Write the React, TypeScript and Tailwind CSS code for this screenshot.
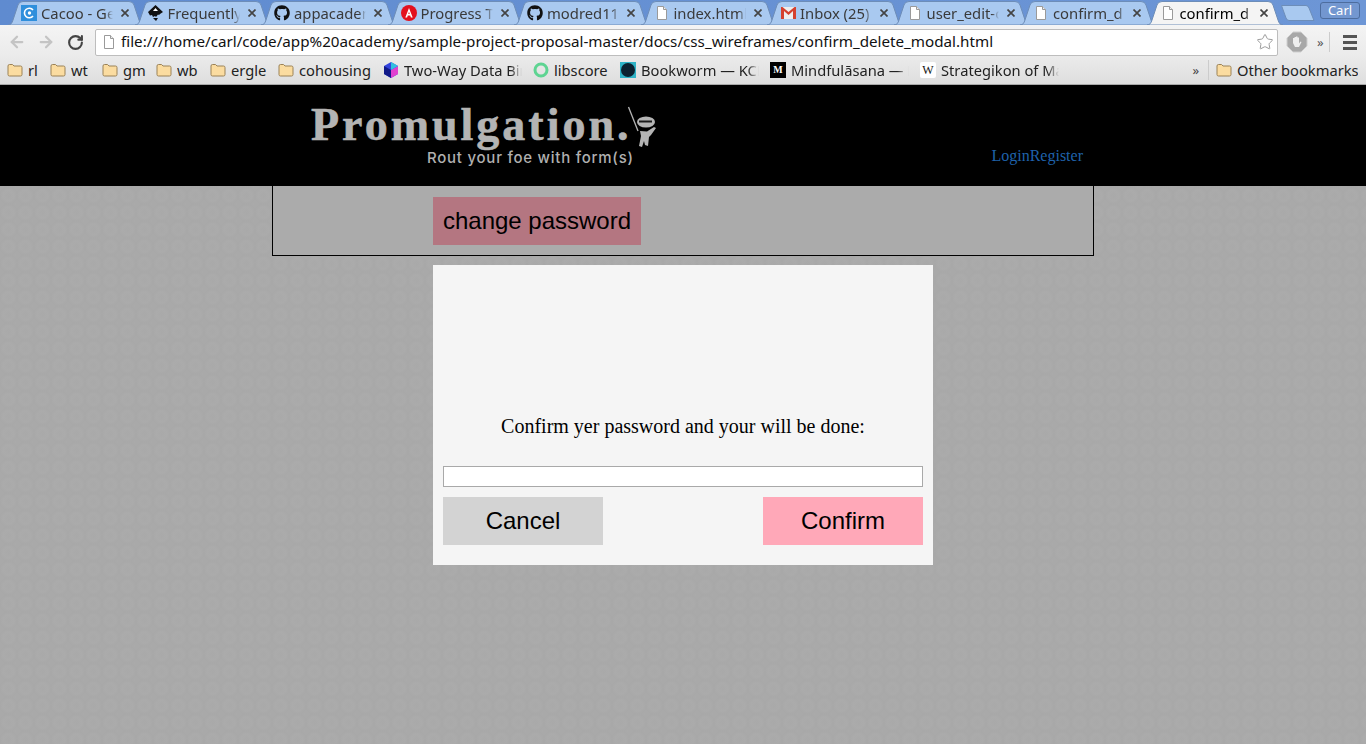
import { ArrowLeft, ArrowRight, RotateCw, Star } from "lucide-react";
import { FaGithub } from "react-icons/fa";

const sans = "font-['Liberation_Sans',Arial,sans-serif]";
const ui = "font-['Noto_Sans','Open_Sans',sans-serif]";

function PageIcon() {
  return (
    <svg width="12" height="14" viewBox="0 0 12 14" className="shrink-0">
      <path d="M1.500.5h6l3 3v10h-9z" fill="#fff" stroke="#9a9a9a" />
      <path d="M7.500.5v3h3" fill="#eee" stroke="#9a9a9a" />
    </svg>
  );
}

function FolderIcon() {
  return (
    <svg width="16" height="14" viewBox="0 0 16 14" className="shrink-0">
      <path d="M1 3q0-1.500 1.500-1.500h3L7 3h6.500Q15 3 15 4.500v7q0 1.500-1.500 1.500h-11Q1 13 1 11.500z" fill="#fbdca0" stroke="#9b8257" />
    </svg>
  );
}

function CacooIcon() {
  return (
    <svg width="16" height="16" viewBox="0 0 16 16" className="shrink-0">
      <rect width="16" height="16" fill="#2f8fdc" />
      <path d="M12 5A4.800 4.800 0 1 0 12 11" fill="none" stroke="#fff" strokeWidth="1.600" />
      <circle cx="8.500" cy="8" r="1.700" fill="#fff" />
    </svg>
  );
}

function InkscapeIcon() {
  return (
    <svg width="17" height="16" viewBox="0 0 17 16" className="shrink-0">
      <path d="M8.500 0L16 7l-3 2-1 1-1-.500L9 12l-1-1-2 1-1-2-2 .500L1 7z" fill="#111" />
      <path d="M8.500 3L11 6H6z" fill="#fff" />
      <path d="M6 13h5l-2 3z" fill="#111" />
    </svg>
  );
}

function AngularIcon() {
  return (
    <svg width="16" height="16" viewBox="0 0 16 16" className="shrink-0">
      <circle cx="8" cy="8" r="8" fill="#e3101e" />
      <path d="M8 3l3.700 9.500h-1.800l-.7-2H6.800l-.7 2H4.300zM7.300 9h1.400L8 6.800z" fill="#fff" />
    </svg>
  );
}

function GmailIcon() {
  return (
    <svg width="15" height="12" viewBox="0 0 15 12" className="shrink-0">
      <rect width="15" height="12" fill="#eee" />
      <path d="M0 0v12h3V4l4.500 4L12 4v8h3V0h-1.500L7.500 5 1.500 0z" fill="#d5412f" />
    </svg>
  );
}

type TabProps = { title: string; icon: React.ReactNode; active?: boolean };

function Tab({ title, icon, active }: TabProps) {
  return (
    <div className="relative flex h-[25px] w-[126.500px] shrink-0 items-center pl-[13px]">
      <svg width="136" height="24" viewBox="0 0 136 24" className="absolute left-0 top-[1px]">
        <path
          d="M0 24C3 24 4 22 5 19L10 4Q11 .5 15 .5H121Q125 .5 126 4L131 19C132 22 133 24 136 24Z"
          fill={active ? "#f4f4f4" : "#a9c9f0"}
          stroke="#6d8db8"
        />
      </svg>
      <div className="relative flex w-[16px] justify-center">{icon}</div>
      <div
        className={`relative ml-[4px] w-[72px] overflow-hidden whitespace-nowrap text-[14.800px] leading-[20px] [mask-image:linear-gradient(to_right,#000_90%,transparent)] ${active ? "text-black" : "text-[#3a3a3a]"} ${ui}`}
      >
        {title}
      </div>
      <div className="absolute left-[108px] top-[4px] flex h-[18px] w-[18px] items-center justify-center">
        <svg width="8" height="8" viewBox="0 0 8 8">
          <path d="M.5.5l7 7M7.500.5l-7 7" stroke="#444" strokeWidth="1.700" />
        </svg>
      </div>
    </div>
  );
}

type BookmarkProps = { label: string; icon: React.ReactNode; itemWidth: string; fade?: boolean };

function Bookmark({ label, icon, itemWidth, fade }: BookmarkProps) {
  return (
    <div className={`flex shrink-0 items-center gap-[5px] ${itemWidth}`}>
      {icon}
      <span
        className={`overflow-hidden whitespace-nowrap text-[14.700px] leading-[20px] text-[#222] ${ui} ${fade ? "w-[118px] [mask-image:linear-gradient(to_right,#000_90%,transparent)]" : ""}`}
      >
        {label}
      </span>
    </div>
  );
}

function BrowserChrome() {
  return (
    <div className="h-[85px] border-b border-[#a8a8a8]">
      <div className="relative flex h-[25px] bg-gradient-to-r from-[#5f8bd0] to-[#6d96d6] pl-[8px]">
        <Tab title="Cacoo - Get" icon={<CacooIcon />} />
        <Tab title="Frequently" icon={<InkscapeIcon />} />
        <Tab title="appacadem" icon={<FaGithub className="h-[16px] w-[16px] text-[#111]" />} />
        <Tab title="Progress T" icon={<AngularIcon />} />
        <Tab title="modred11," icon={<FaGithub className="h-[16px] w-[16px] text-[#111]" />} />
        <Tab title="index.html" icon={<PageIcon />} />
        <Tab title="Inbox (25)" icon={<GmailIcon />} />
        <Tab title="user_edit-c" icon={<PageIcon />} />
        <Tab title="confirm_d" icon={<PageIcon />} />
        <Tab title="confirm_d" icon={<PageIcon />} active />
        <svg width="34" height="16" viewBox="0 0 34 16" className="absolute left-[1281px] top-[5px]">
          <path d="M.5.5H25Q27 .5 28 3L33 15.500H8Q6 15.500 5 13z" fill="#a9c9f0" stroke="#6d8db8" />
        </svg>
        <div className={`absolute left-[1320px] top-[2px] flex h-[17px] w-[40px] items-center justify-center rounded-[3px] border border-[#4d6d9e] bg-[#7397d0] text-[13px] leading-none text-white ${ui}`}>
          Carl
        </div>
      </div>
      <div className="flex h-[31px] items-center bg-gradient-to-b from-[#f4f4f4] to-[#ebebeb] pl-[8px] pr-[5px] pt-[3px]">
        <ArrowLeft className="h-[18px] w-[18px] text-[#c4c4c4]" strokeWidth={3} />
        <ArrowRight className="ml-[11px] h-[18px] w-[18px] text-[#c4c4c4]" strokeWidth={3} />
        <RotateCw className="ml-[12px] h-[17px] w-[17px] text-[#444]" strokeWidth={3} />
        <div className="ml-[11px] flex h-[27px] w-[1183px] items-center rounded-[2px] border border-[#bdbdbd] bg-white pl-[7px] pr-[3px]">
          <PageIcon />
          <span className={`ml-[6px] whitespace-nowrap text-[15.200px] leading-none text-[#111] ${ui}`}>
            file:///home/carl/code/app%20academy/sample-project-proposal-master/docs/css_wireframes/confirm_delete_modal.html
          </span>
          <Star className="ml-auto h-[18px] w-[18px] text-[#999]" strokeWidth={1.300} />
        </div>
        <svg width="22" height="22" viewBox="0 0 22 22" className="ml-[8px]">
          <path d="M7 1h8l6 6v8l-6 6H7l-6-6V7z" fill="#a8a8a8" stroke="#cfcfcf" />
          <path d="M7 11V7h1.500v3V6h1.500v4V5.500h1.500V10V6.500H13v6l1.500-2 1 .5-2.500 5H9l-2-4z" fill="#eee" />
        </svg>
        <span className={`ml-[9px] text-[13px] leading-none text-[#555] ${ui}`}>»</span>
        <div className="ml-[5px] h-[20px] w-px bg-[#ccc]" />
        <div className="ml-[13px] flex w-[14px] flex-col gap-[3px]">
          <div className="h-[3px] bg-[#555]" />
          <div className="h-[3px] bg-[#555]" />
          <div className="h-[3px] bg-[#555]" />
        </div>
      </div>
      <div className="flex h-[28px] items-center bg-gradient-to-b from-[#ebebeb] to-[#dedede] pl-[7px] pr-[8px]">
        <Bookmark label="rl" itemWidth="w-[43px]" icon={<FolderIcon />} />
        <Bookmark label="wt" itemWidth="w-[52px]" icon={<FolderIcon />} />
        <Bookmark label="gm" itemWidth="w-[54px]" icon={<FolderIcon />} />
        <Bookmark label="wb" itemWidth="w-[54px]" icon={<FolderIcon />} />
        <Bookmark label="ergle" itemWidth="w-[68px]" icon={<FolderIcon />} />
        <Bookmark label="cohousing" itemWidth="w-[105px]" icon={<FolderIcon />} />
        <Bookmark
          label="Two-Way Data Binding"
          itemWidth="w-[150px]"
          fade
          icon={
            <svg width="16" height="16" viewBox="0 0 16 16" className="shrink-0">
              <path d="M8 0l7 4v8l-7 4-7-4V4z" fill="#3344dd" />
              <path d="M8 8l7-4v8l-7 4z" fill="#e040d0" />
              <path d="M8 0l7 4-7 4z" fill="#30c0e0" />
              <path d="M1 4l7 4v8l-7-4z" fill="#111a88" />
            </svg>
          }
        />
        <Bookmark
          label="libscore"
          itemWidth="w-[87px]"
          icon={
            <svg width="16" height="16" viewBox="0 0 16 16" className="shrink-0">
              <circle cx="8" cy="8" r="6" fill="none" stroke="#5ed492" strokeWidth="3" />
            </svg>
          }
        />
        <Bookmark
          label="Bookworm — KCRW"
          itemWidth="w-[150px]"
          fade
          icon={
            <svg width="16" height="16" viewBox="0 0 16 16" className="shrink-0">
              <rect width="16" height="16" fill="#2fb3c6" />
              <circle cx="8" cy="8" r="7" fill="#0c2230" />
            </svg>
          }
        />
        <Bookmark
          label="Mindfulāsana — Medium"
          itemWidth="w-[150px]"
          fade
          icon={
            <div className="flex h-[16px] w-[16px] shrink-0 items-center justify-center bg-black text-[10px] font-bold leading-none text-white font-['Liberation_Serif',serif]">
              M
            </div>
          }
        />
        <Bookmark
          label="Strategikon of Maurice"
          itemWidth="w-[150px]"
          fade
          icon={
            <div className="flex h-[16px] w-[16px] shrink-0 items-center justify-center rounded-[2px] bg-white text-[12px] leading-none text-[#111] font-['Liberation_Serif',serif]">
              W
            </div>
          }
        />
        <span className={`ml-auto text-[13px] leading-none text-[#444] ${ui}`}>»</span>
        <div className="ml-[9px] h-[20px] w-px bg-[#ccc]" />
        <div className="ml-[7px]">
          <Bookmark label="Other bookmarks" itemWidth="w-[142px]" icon={<FolderIcon />} />
        </div>
      </div>
    </div>
  );
}

function SiteHeader() {
  return (
    <div className="h-[101px] bg-black">
      <div className="mx-auto flex h-full w-[822px] justify-between pr-[11px]">
        <div className="relative ml-[39px] w-[360px]">
          <div className="pt-[15px] text-[46px] font-bold leading-[50px] tracking-[3px] text-[#b4b4b4] [-webkit-text-stroke:0.6px_#b4b4b4] font-['Liberation_Serif',serif]">
            Promulgation.
          </div>
          <div className="ml-[116px] whitespace-nowrap text-[15px] font-medium leading-[16px] tracking-[0.750px] text-[#b0b0b0] font-['Inter',sans-serif]">
            Rout your foe with form(s)
          </div>
          {/* Ninja mascot */}
          <svg width="50" height="50" viewBox="0 0 50 50" className="absolute left-[309px] top-[15px]">
            <path d="M8.500 7L18 31" stroke="#b4b4b4" strokeWidth="1.300" />
            <ellipse cx="26" cy="22" rx="9" ry="5.500" fill="#b4b4b4" />
            <path d="M19 21.500h13" stroke="#1a1a1a" strokeWidth="2" />
            <path d="M20 31l7 .5 7-4.500 2 1-5 7-2 2-1 9-3-1-1-4-2 6-3-1 2-10z" fill="#b4b4b4" />
          </svg>
        </div>
        <div className="pt-[61px] text-[16px] leading-[20px] text-[#1f62aa] font-['Liberation_Serif',serif]">
          <span>Login</span>
          <span>Register</span>
        </div>
      </div>
    </div>
  );
}

function ConfirmModal() {
  return (
    <div className="mx-auto mt-[9px] h-[300px] w-[500px] bg-[#f5f5f5] p-[10px] pt-[150px]">
      <p className="text-center text-[20px] leading-[23px] text-black font-['Liberation_Serif',serif]">
        Confirm yer password and your will be done:
      </p>
      <input className="mt-[28px] block h-[21px] w-full border border-[#a9a9a9] bg-white" />
      <div className="mt-[10px] flex justify-between">
        <button className={`h-[48px] w-[160px] bg-[#d3d3d3] text-[24px] text-black ${sans}`}>Cancel</button>
        <button className={`h-[48px] w-[160px] bg-[#ffa8b8] text-[24px] text-black ${sans}`}>Confirm</button>
      </div>
    </div>
  );
}

export default function App() {
  return (
    <div className="h-[744px] overflow-hidden bg-[#a9a9a9] bg-[radial-gradient(circle,#a9a9a9_0,#ababab_45%,#a8a8a8_70%,#aaaaaa_100%)] bg-[length:17px_17px]">
      <BrowserChrome />
      <SiteHeader />
      <div className="mx-auto h-[70px] w-[822px] border border-t-0 border-black bg-[#ababab] pl-[160px] pt-[11px]">
        <button className={`h-[48px] w-[208px] bg-[#b47681] text-[24px] text-black ${sans}`}>change password</button>
      </div>
      <ConfirmModal />
    </div>
  );
}
